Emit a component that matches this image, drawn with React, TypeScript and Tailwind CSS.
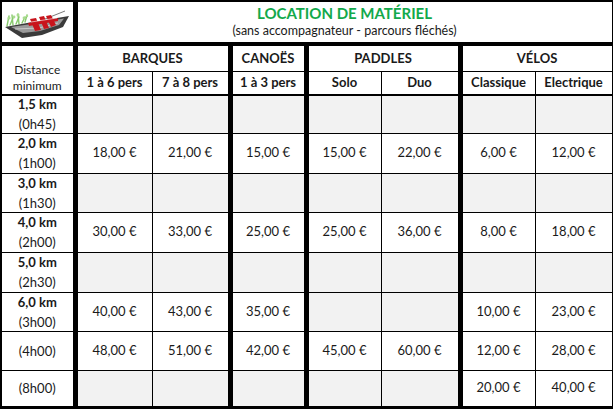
import React from 'react';

type Row = { km?: string; time: string; prices: (number | null)[] };

const rows: Row[] = [
  { km: '1,5 km', time: '(0h45)', prices: [null, null, null, null, null, null, null] },
  { km: '2,0 km', time: '(1h00)', prices: [18, 21, 15, 15, 22, 6, 12] },
  { km: '3,0 km', time: '(1h30)', prices: [null, null, null, null, null, null, null] },
  { km: '4,0 km', time: '(2h00)', prices: [30, 33, 25, 25, 36, 8, 18] },
  { km: '5,0 km', time: '(2h30)', prices: [null, null, null, null, null, null, null] },
  { km: '6,0 km', time: '(3h00)', prices: [40, 43, 35, null, null, 10, 23] },
  { time: '(4h00)', prices: [48, 51, 42, 45, 60, 12, 28] },
  { time: '(8h00)', prices: [null, null, null, null, null, 20, 40] },
];

const rowHeights = ['h-[38px]', 'h-[40px]', 'h-[39px]', 'h-[40px]', 'h-[40px]', 'h-[39px]', 'h-[39px]', 'h-[37px]'];

// thick separator before barques, canoës, paddles, vélos
const thickLeft = [true, false, true, true, false, true, false];

const euro = (n: number) => `${n.toFixed(2).replace('.', ',')} €`;

const BoatLogo = () => (
  <svg width="68" height="36" viewBox="0 0 68 36" className="mx-auto block">
    {/* reeds */}
    <g stroke="#86c96b" strokeWidth="1.4" strokeLinecap="round" fill="none">
      <path d="M4 22 L6 12" />
      <path d="M7 21 L10 14" />
      <path d="M10 21 L9 11" />
      <path d="M13 20 L16 13" />
      <path d="M16 20 L15 10" />
      <path d="M19 19 L22 13" />
      <path d="M22 18 L24 11" />
    </g>
    <g fill="#a9dc8f">
      <circle cx="6" cy="14" r="1.6" />
      <circle cx="11" cy="13" r="1.4" />
      <circle cx="15" cy="11" r="1.5" />
      <circle cx="21" cy="14" r="1.4" />
      <circle cx="24" cy="12" r="1.2" />
    </g>
    {/* oar */}
    <path d="M42 15 L62 7" stroke="#7a7a7a" strokeWidth="1" />
    {/* hull */}
    <path d="M2 23 L24 19 L66 12 L60 23 L39 31 L19 34 Z" fill="#3b3b3b" />
    <path d="M8 23 L25 20.5 L61 14.5 L56 21 L37 27 L20 29 Z" fill="#9a9a9a" />
    <path d="M12 25 L36 24 L55 19" stroke="#d6d6d6" strokeWidth="0.8" fill="none" />
    {/* red seats / bands */}
    <g fill="#c8141c">
      <path d="M27 15 L33 14 L38 26 L32 27 Z" />
      <path d="M36 13 L41 12 L46 24 L41 25 Z" />
      <path d="M43 12 L48 11 L53 21 L48 23 Z" />
      <path d="M25 19 L55 14 L55 17 L26 22 Z" />
    </g>
    <path d="M28 18 L54 14" stroke="#ffffff" strokeWidth="0.6" />
  </svg>
);

export default function App() {
  return (
    <div className="w-[613px] h-[410px] bg-white overflow-hidden" style={{ fontFamily: 'Lato, "Open Sans", sans-serif' }}>
      <table className="w-[613px] table-fixed border-collapse text-[#1a1a1a] border-t-2 border-l-2 border-r-[5px] border-b-[3px] border-black">
        <colgroup>
          <col className="w-[74px]" />
          <col className="w-[77px]" />
          <col className="w-[78px]" />
          <col className="w-[76px]" />
          <col className="w-[75px]" />
          <col className="w-[79px]" />
          <col className="w-[75px]" />
          <col className="w-[79px]" />
        </colgroup>
        <tbody>
          <tr className="h-[43px]">
            <td className="border border-black border-b-4 p-0 align-middle">
              <BoatLogo />
            </td>
            <td colSpan={7} className="border border-black border-b-4 border-l-[5px] p-0 text-center align-middle">
              <div className="text-[15px] font-bold leading-[18px] text-[#12a94b]">LOCATION DE MATÉRIEL</div>
              <div className="text-[12.5px] leading-[18px]">(sans accompagnateur - parcours fléchés)</div>
            </td>
          </tr>
          <tr className="h-[27px]">
            <td rowSpan={2} className="border border-black border-b-2 p-0 text-center align-bottom text-[12px] leading-[16px]">
              Distance
              <br />
              minimum
            </td>
            <td colSpan={2} className="border border-black border-l-[5px] p-0 text-center text-[13px] font-bold">BARQUES</td>
            <td className="border border-black border-l-[5px] p-0 text-center text-[13px] font-bold">CANOËS</td>
            <td colSpan={2} className="border border-black border-l-[5px] p-0 text-center text-[13px] font-bold">PADDLES</td>
            <td colSpan={2} className="border border-black border-l-[5px] p-0 text-center text-[13px] font-bold">VÉLOS</td>
          </tr>
          <tr className="h-[24px]">
            <td className="border border-black border-b-2 border-l-[5px] p-0 text-center text-[13px] font-bold">1 à 6 pers</td>
            <td className="border border-black border-b-2 p-0 text-center text-[13px] font-bold">7 à 8 pers</td>
            <td className="border border-black border-b-2 border-l-[5px] p-0 text-center text-[13px] font-bold">1 à 3 pers</td>
            <td className="border border-black border-b-2 border-l-[5px] p-0 text-center text-[13px] font-bold">Solo</td>
            <td className="border border-black border-b-2 p-0 text-center text-[13px] font-bold">Duo</td>
            <td className="border border-black border-b-2 border-l-[5px] p-0 text-center text-[13px] font-bold">Classique</td>
            <td className="border border-black border-b-2 p-0 text-center text-[13px] font-bold">Electrique</td>
          </tr>
          {rows.map((r, i) => (
            <tr key={r.time} className={rowHeights[i]}>
              <td className="border border-black p-0 text-center align-middle text-[13px] leading-[20px]">
                <div className="flex h-[34px] flex-col justify-center">
                  {r.km && <div className="font-bold">{r.km}</div>}
                  <div>{r.time}</div>
                </div>
              </td>
              {r.prices.map((p, j) => (
                <td
                  key={j}
                  className={`border border-black p-0 text-center align-middle text-[13px] ${thickLeft[j] ? 'border-l-[5px]' : ''} ${p === null ? 'bg-[#f2f2f2]' : 'bg-white'}`}
                >
                  {p !== null ? euro(p) : ''}
                </td>
              ))}
            </tr>
          ))}
        </tbody>
      </table>
    </div>
  );
}
